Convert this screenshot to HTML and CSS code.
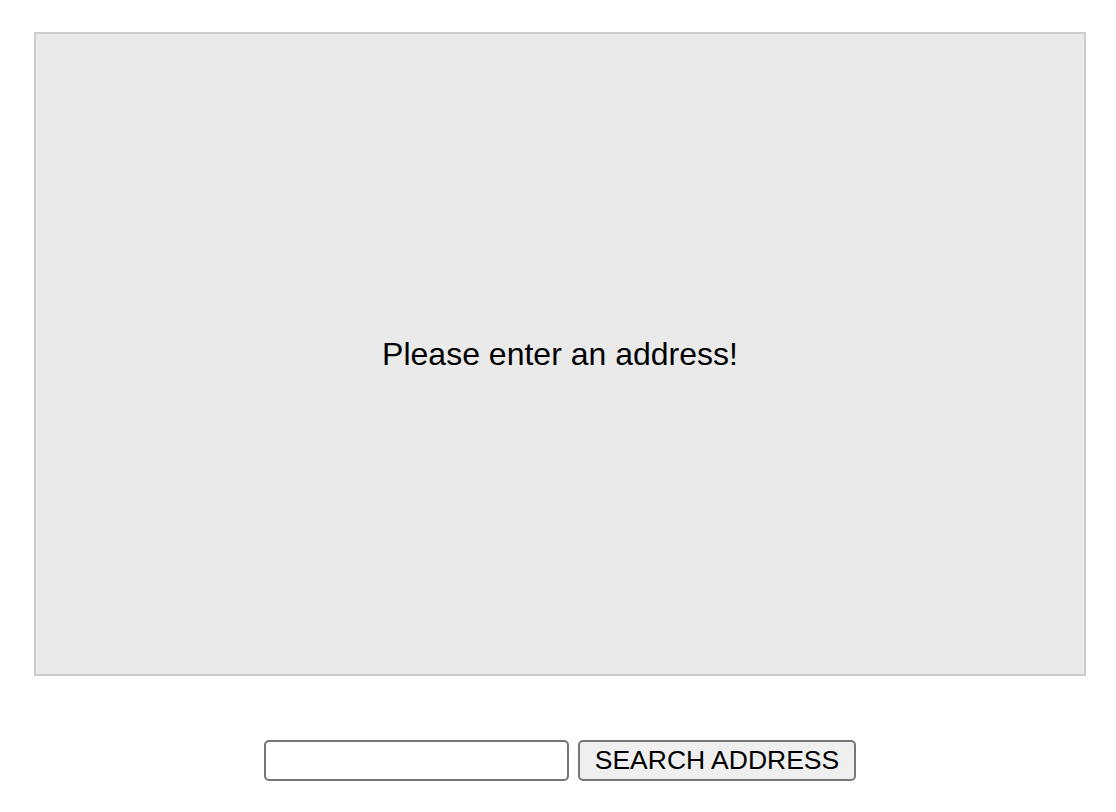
FILE: index.html
```html
<!DOCTYPE html>
<html>
<head>
<meta charset="utf-8">
<link rel="stylesheet" href="styles.css">
</head>
<body>
<div class="page">
  <div class="map">
    <p class="message">Please enter an address!</p>
  </div>
  <form class="search">
    <input class="search-input" type="text">
    <button class="search-button" type="button">SEARCH ADDRESS</button>
  </form>
</div>
</body>
</html>
```
FILE: styles.css
```css
html, body {
  margin: 0;
  padding: 0;
  background: #ffffff;
}
.page {
  padding: 32px 30px 0 34px;
  font-family: "Liberation Sans", Arial, sans-serif;
}
.map {
  box-sizing: border-box;
  height: 644px;
  border: 2px solid #cbcbcb;
  background: #eaeaea;
  display: flex;
  align-items: center;
  justify-content: center;
}
.message {
  margin: 0;
  font-size: 32px;
  color: #000;
  line-height: 1.15;
}
.search {
  margin-top: 64px;
  display: flex;
  justify-content: center;
  gap: 9px;
}
.search-input {
  box-sizing: border-box;
  width: 305px;
  height: 41px;
  border: 2px solid #767676;
  border-radius: 5px;
  background: #fff;
  padding: 2px 4px;
  font-family: "Liberation Sans", Arial, sans-serif;
  font-size: 26px;
  margin: 0;
}
.search-button {
  box-sizing: border-box;
  width: 278px;
  height: 41px;
  border: 2px solid #767676;
  border-radius: 5px;
  background: #efefef;
  color: #000;
  padding: 0 12px;
  font-family: "Liberation Sans", Arial, sans-serif;
  font-size: 26.5px;
  margin: 0;
}
```
